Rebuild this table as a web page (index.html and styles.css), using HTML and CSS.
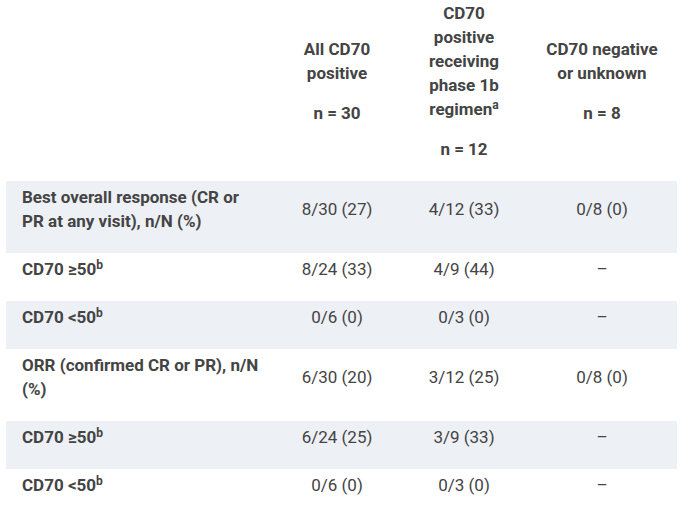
FILE: index.html
```html
<!DOCTYPE html>
<html lang="en">
<head>
<meta charset="utf-8">
<title>CD70 response table</title>
<link rel="stylesheet" href="styles.css">
</head>
<body>
<div class="wrap">
<table class="results">
  <colgroup>
    <col class="c-label">
    <col class="c-a">
    <col class="c-b">
    <col class="c-c">
  </colgroup>
  <thead>
    <tr>
      <th></th>
      <th><p>All CD70 positive</p><p class="n">n = 30</p></th>
      <th><p>CD70 positive receiving phase 1b regimen<sup>a</sup></p><p class="n">n = 12</p></th>
      <th><p>CD70 negative or unknown</p><p class="n">n = 8</p></th>
    </tr>
  </thead>
  <tbody>
    <tr class="shade">
      <td class="label">Best overall response (CR or PR at any visit), n/N (%)</td>
      <td>8/30 (27)</td><td>4/12 (33)</td><td>0/8 (0)</td>
    </tr>
    <tr>
      <td class="label">CD70 ≥50<sup>b</sup></td>
      <td>8/24 (33)</td><td>4/9 (44)</td><td>–</td>
    </tr>
    <tr class="shade">
      <td class="label">CD70 &lt;50<sup>b</sup></td>
      <td>0/6 (0)</td><td>0/3 (0)</td><td>–</td>
    </tr>
    <tr>
      <td class="label">ORR (confirmed CR or PR), n/N (%)</td>
      <td>6/30 (20)</td><td>3/12 (25)</td><td>0/8 (0)</td>
    </tr>
    <tr class="shade">
      <td class="label">CD70 ≥50<sup>b</sup></td>
      <td>6/24 (25)</td><td>3/9 (33)</td><td>–</td>
    </tr>
    <tr>
      <td class="label">CD70 &lt;50<sup>b</sup></td>
      <td>0/6 (0)</td><td>0/3 (0)</td><td>–</td>
    </tr>
  </tbody>
</table>
</div>
</body>
</html>
```
FILE: styles.css
```css
html, body {
  margin: 0;
  padding: 0;
  background: #ffffff;
}
body {
  font-family: Roboto, "Liberation Sans", Arial, sans-serif;
  color: #444444;
  font-size: 17px;
  line-height: 24px;
}
.wrap {
  padding-left: 6px;
}
.results {
  width: 671px;
  table-layout: fixed;
  border-collapse: collapse;
  border-spacing: 0;
}
.c-label { width: 267px; }
.c-a { width: 128px; }
.c-b { width: 126px; }
.c-c { width: 150px; }

.results th {
  font-weight: 700;
  text-align: center;
  vertical-align: middle;
  padding: 1px 14px 20px;
}
.results th p {
  margin: 0;
}
.results th p.n {
  margin-top: 16px;
}
.results td {
  text-align: center;
  vertical-align: middle;
  padding: 4px 14px 20px;
  font-weight: 400;
}
.results td.label {
  text-align: left;
  vertical-align: top;
  font-weight: 700;
  padding-left: 16px;
  padding-right: 12px;
}
.results tr.shade td {
  background: #edf0f5;
}
sup {
  font-size: 12px;
  line-height: 0;
  vertical-align: 6px;
}
```
